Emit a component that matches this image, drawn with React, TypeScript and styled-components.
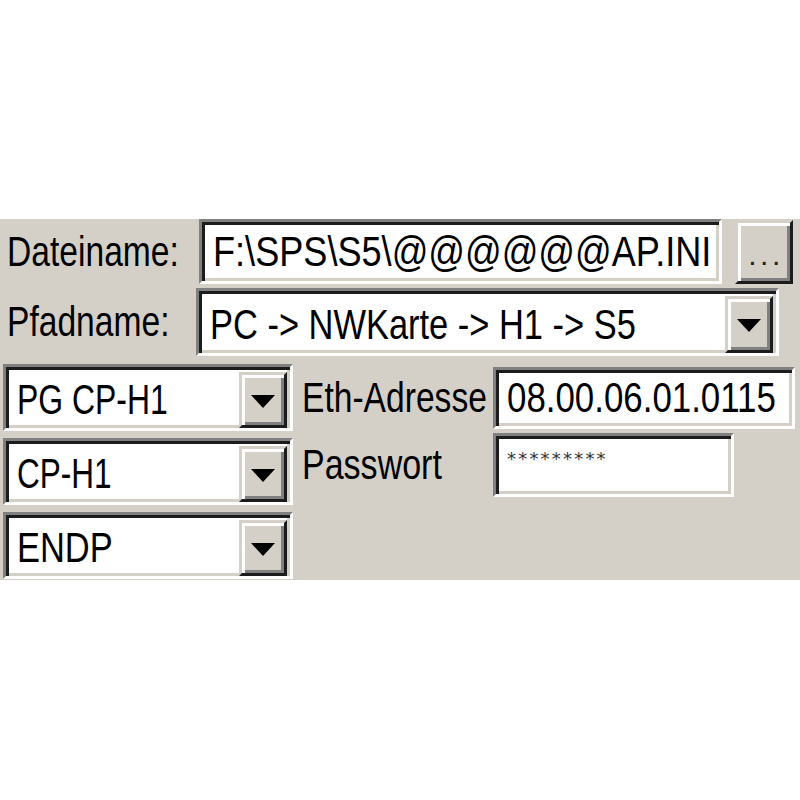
import React from 'react'
import styled, { createGlobalStyle, css } from 'styled-components'

const GlobalStyle = createGlobalStyle`
  html, body {
    margin: 0;
    padding: 0;
    background: #ffffff;
  }
  body {
    font-family: "Liberation Sans", Arial, sans-serif;
    color: #000;
  }
`

const sunken = css`
  box-sizing: border-box;
  background: #ffffff;
  border: 3px solid;
  border-color: #808080 #ffffff #ffffff #808080;
  box-shadow: inset 3px 3px 0 #1c1c1c, inset -3px -3px 0 #d4d0c8;
`

const raised = css`
  box-sizing: border-box;
  background: #d4d0c8;
  border: 3px solid;
  border-color: #d4d0c8 #1c1c1c #1c1c1c #d4d0c8;
  box-shadow: inset 3px 3px 0 #ffffff, inset -3px -3px 0 #808080;
`

const Page = styled.div`
  width: 800px;
  height: 800px;
  padding-top: 219px;
  box-sizing: border-box;
  background: #ffffff;
`

const Dialog = styled.div`
  height: 361px;
  background: #d4d0c8;
  display: flex;
  flex-direction: column;
`

const Row = styled.div<{ $h: number; $mt?: number }>`
  display: flex;
  align-items: center;
  height: ${p => p.$h}px;
  margin-top: ${p => p.$mt || 0}px;
`

const Label = styled.div<{ $w: number; $pl?: number }>`
  width: ${p => p.$w}px;
  padding-left: ${p => p.$pl ?? 7}px;
  box-sizing: border-box;
  font-size: 42px;
  line-height: 1;
  white-space: nowrap;
`

const Txt = styled.span<{ $sx: number }>`
  display: inline-block;
  white-space: nowrap;
  font-size: 42px;
  line-height: 1;
  transform: scaleX(${p => p.$sx});
  transform-origin: left center;
`

const TextBox = styled.div<{ $w: number; $h: number }>`
  ${sunken};
  width: ${p => p.$w}px;
  height: ${p => p.$h}px;
  padding-left: 11px;
  display: flex;
  align-items: center;
  flex-shrink: 0;
`

const PwBox = styled(TextBox)`
  align-items: flex-start;
  padding-top: 12px;
`

const Stars = styled.span`
  font-family: "DejaVu Sans", sans-serif;
  font-size: 18px;
  letter-spacing: 2.2px;
  color: #333;
`

const Combo = styled.div<{ $w: number; $h: number }>`
  ${sunken};
  width: ${p => p.$w}px;
  height: ${p => p.$h}px;
  padding: 5px 3px 0 11px;
  display: flex;
  align-items: center;
  flex-shrink: 0;
`

const ComboText = styled.div`
  flex: 1;
  min-width: 0;
`

const DropBtn = styled.div`
  ${raised};
  width: 48px;
  align-self: stretch;
  display: flex;
  align-items: center;
  justify-content: center;
`

const Arrow = styled.div`
  width: 0;
  height: 0;
  border-left: 12px solid transparent;
  border-right: 12px solid transparent;
  border-top: 13px solid #000;
  margin-top: 2px;
`

const DotsBtn = styled.div`
  ${raised};
  width: 58px;
  height: 64px;
  margin-left: 13px;
  display: flex;
  align-items: center;
  justify-content: center;
  font-size: 30px;
  letter-spacing: 3.5px;
  line-height: 1;
  padding: 6px 0 0 4px;
  color: #222;
`

const Lower = styled.div`
  display: flex;
  margin-top: 8px;
`

const LeftCol = styled.div`
  display: flex;
  flex-direction: column;
  gap: 7px;
  padding-left: 3px;
`

const RightCol = styled.div`
  display: flex;
  flex-direction: column;
  margin-left: 9px;
  padding-top: 3px;
  gap: 4px;
`

const Select = ({ text, sx, h }: { text: string; sx: number; h: number }) => (
  <Combo $w={290} $h={h}>
    <ComboText>
      <Txt $sx={sx}>{text}</Txt>
    </ComboText>
    <DropBtn>
      <Arrow />
    </DropBtn>
  </Combo>
)

export default function App() {
  return (
    <Page>
      <GlobalStyle />
      <Dialog>
        <Row $h={65}>
          <Label $w={199}>
            <Txt $sx={0.8}>Dateiname:</Txt>
          </Label>
          <TextBox $w={523} $h={65}>
            <Txt $sx={0.86}>F:\SPS\S5\@@@@@@AP.INI</Txt>
          </TextBox>
          <DotsBtn>...</DotsBtn>
        </Row>
        <Row $h={68} $mt={4}>
          <Label $w={196}>
            <Txt $sx={0.8}>Pfadname:</Txt>
          </Label>
          <Combo $w={583} $h={68}>
            <ComboText>
              <Txt $sx={0.82}>PC -&gt; NWKarte -&gt; H1 -&gt; S5</Txt>
            </ComboText>
            <DropBtn>
              <Arrow />
            </DropBtn>
          </Combo>
        </Row>
        <Lower>
          <LeftCol>
            <Select text="PG CP-H1" sx={0.76} h={67} />
            <Select text="CP-H1" sx={0.75} h={67} />
            <Select text="ENDP" sx={0.82} h={67} />
          </LeftCol>
          <RightCol>
            <Row $h={62}>
              <Label $w={191} $pl={0}>
                <Txt $sx={0.8}>Eth-Adresse</Txt>
              </Label>
              <TextBox $w={302} $h={62}>
                <Txt $sx={0.83}>08.00.06.01.0115</Txt>
              </TextBox>
            </Row>
            <Row $h={64}>
              <Label $w={191} $pl={0}>
                <Txt $sx={0.81}>Passwort</Txt>
              </Label>
              <PwBox $w={241} $h={64}>
                <Stars>*********</Stars>
              </PwBox>
            </Row>
          </RightCol>
        </Lower>
      </Dialog>
    </Page>
  )
}
